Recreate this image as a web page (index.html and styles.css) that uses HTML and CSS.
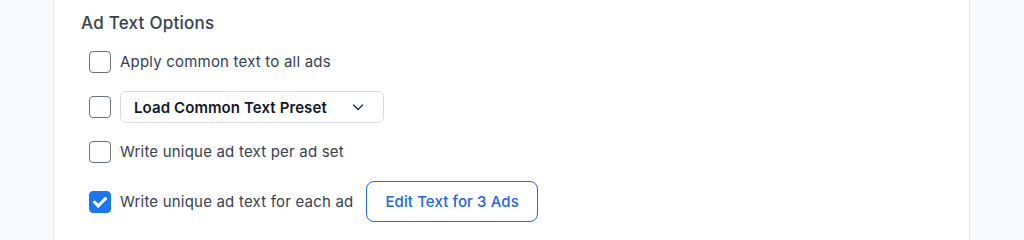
FILE: index.html
```html
<!DOCTYPE html>
<html lang="en">
<head>
  <meta charset="UTF-8" />
  <meta name="viewport" content="width=device-width, initial-scale=1.0" />
  <title>Ad Text Options</title>
  <link rel="stylesheet" href="styles.css">
</head>
<body>

  <div class="card">
    <h3 class="section-title">Ad Text Options</h3>

    <div class="options">
      <label class="option">
        <input type="checkbox" class="check" />
        <span>Apply common text to all ads</span>
      </label>

      <div class="option">
        <input type="checkbox" class="check" />
        <button class="preset-select" type="button">
          <span>Load Common Text Preset</span>
          <svg width="12" height="12" viewBox="0 0 12 12" fill="none">
            <path d="M1.5 4l4.5 4.5L10.5 4" stroke="#1f2937" stroke-width="1.2" stroke-linecap="round" stroke-linejoin="round"/>
          </svg>
        </button>
      </div>

      <label class="option">
        <input type="checkbox" class="check" />
        <span>Write unique ad text per ad set</span>
      </label>

      <div class="option">
        <label class="option-inline">
          <input type="checkbox" class="check" checked />
          <span>Write unique ad text for each ad</span>
        </label>
        <button class="edit-btn" type="button">Edit Text for 3 Ads</button>
      </div>
    </div>
  </div>

</body>
</html>
```

FILE: styles.css
```css
body {
  margin: 0;
  background-color: #f8faff;
  font-family: Inter, "Noto Sans", sans-serif;
  color: #374151;
  height: 240px;
  overflow: hidden;
}

/* Card */
.card {
  margin-left: 53px;
  width: 888px;
  height: 240px;
  background-color: #ffffff;
  border-left: 1px solid #e5e7eb;
  border-right: 1px solid #e5e7eb;
  padding: 11px 0 0 27px;
}

.section-title {
  margin: 0;
  font-size: 17px;
  line-height: 24px;
  font-weight: 500;
  letter-spacing: 0.25px;
  color: #374151;
}

/* Option rows */
.options {
  display: flex;
  flex-direction: column;
  gap: 18px;
  margin-top: 16px;
  padding-left: 8px;
}

.option,
.option-inline {
  display: flex;
  align-items: center;
  gap: 9px;
  font-size: 15px;
  line-height: 20px;
  letter-spacing: 0.2px;
  color: #374151;
}

.option-inline {
  margin-right: 4px;
}

/* Checkbox */
.check {
  appearance: none;
  -webkit-appearance: none;
  margin: 0;
  width: 22px;
  height: 22px;
  border: 1.5px solid #6b7280;
  border-radius: 4px;
  background-color: #ffffff;
  box-sizing: border-box;
  flex-shrink: 0;
  position: relative;
}

.check:checked {
  background-color: #1877f2;
  border-color: #1877f2;
}

.check:checked::after {
  content: "";
  position: absolute;
  left: 6px;
  top: 2px;
  width: 5px;
  height: 10px;
  border: solid #ffffff;
  border-width: 0 3px 3px 0;
  transform: rotate(45deg);
}

/* Preset dropdown */
.preset-select {
  display: flex;
  align-items: center;
  justify-content: space-between;
  width: 264px;
  height: 32px;
  padding: 0 19px 0 13px;
  background-color: #ffffff;
  border: 1px solid #d9dce1;
  border-radius: 6px;
  font-family: Inter, "Noto Sans", sans-serif;
  font-size: 15px;
  font-weight: 600;
  letter-spacing: 0.1px;
  color: #111827;
  box-sizing: border-box;
}

/* Edit button */
.edit-btn {
  height: 41px;
  padding: 0 18px;
  background-color: #ffffff;
  border: 1px solid #2563eb;
  border-radius: 8px;
  font-family: Inter, "Noto Sans", sans-serif;
  font-size: 15px;
  font-weight: 500;
  letter-spacing: 0.1px;
  color: #2563eb;
}
```
